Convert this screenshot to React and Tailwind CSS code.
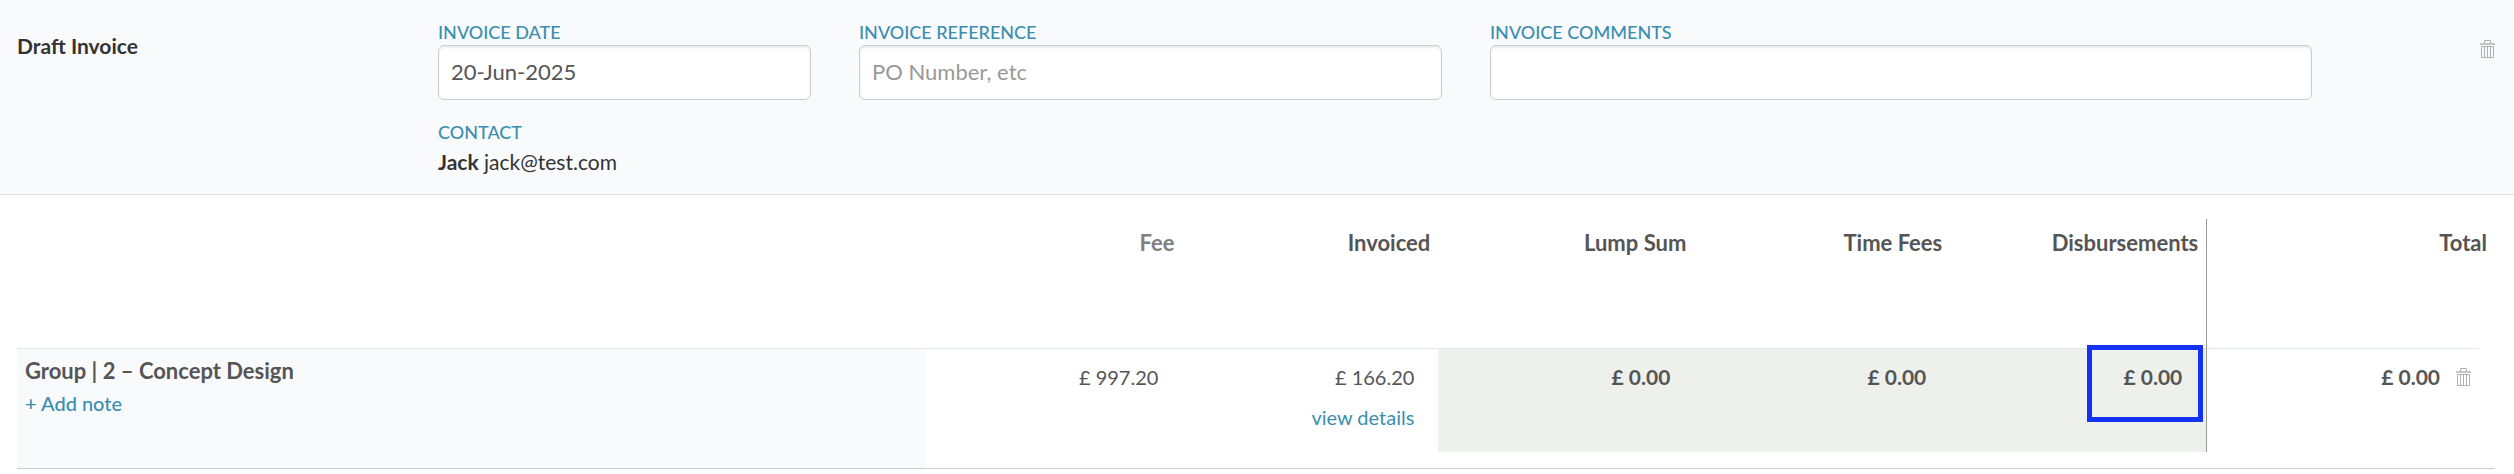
import { useState } from "react";

const columns = [
  { title: 'Fee', value: '£ 997.20', muted: true },
  { title: 'Invoiced', value: '£ 166.20', details: true },
  { title: 'Lump Sum', value: '£ 0.00', editable: true },
  { title: 'Time Fees', value: '£ 0.00', editable: true },
  { title: 'Disbursements', value: '£ 0.00', editable: true, selected: true },
];

const App = () => {
  const [date, setDate] = useState('20-Jun-2025');
  const [reference, setReference] = useState('');
  const [comments, setComments] = useState('');

  return (
    <div className="w-full bg-white font-['Lato','Liberation_Sans',sans-serif] text-xl leading-6 text-[#555]">
      {/* invoice header */}
      <header className="grid grid-cols-[373fr_373fr_583fr_822fr_135fr] gap-x-12 pl-[17px] pr-[19px] py-5 bg-[#f9fafc] border-b border-[#ddd]">
        <h1 className="pt-3.5 font-bold text-[21px]/6 text-[#333]">Draft Invoice</h1>

        <div>
          <Field id="date" label="INVOICE DATE" value={date} onChange={setDate} />

          <h2 className="mt-5 font-medium text-lg/6 text-[#3a8fb0]">CONTACT</h2>
          <p className="mt-1.5 text-[21px]/6 text-[#333]">
            <strong>Jack</strong> jack@test.com
          </p>
        </div>

        <Field
          id="reference"
          label="INVOICE REFERENCE"
          placeholder="PO Number, etc"
          value={reference}
          onChange={setReference}
        />
        <Field id="comments" label="INVOICE COMMENTS" value={comments} onChange={setComments} />

        <div className="flex justify-end items-start pt-5">
          <DeleteButton label="Delete invoice" />
        </div>
      </header>

      {/* fees table */}
      <div className="pl-[17px] pr-[19px] pt-6">
        <table className="w-full table-fixed border-separate border-spacing-0">
          <thead>
            <tr className="h-[129px] align-top text-[22px]/6 text-right">
              <th className="w-[36.7%]" aria-label="Stage"></th>
              {columns.map((col) => (
                <th
                  key={col.title}
                  className={`w-[10.33%] pt-3 pr-2 font-bold ${col.muted ? 'text-[#808080]' : ''}`}
                >
                  {col.title}
                </th>
              ))}
              <th className="pt-3 pr-2 font-bold border-l border-[#999]">Total</th>
            </tr>
          </thead>

          <tbody>
            <tr className="align-top">
              <td className="px-2 pt-2.5 bg-[#f9fafc] border-t border-b border-t-[#dfe5ee] border-b-[#ccc]">
                <p className="font-bold text-[22px]/6">Group | 2 – Concept Design</p>
                <a href="#note" className="block mt-2 font-medium text-[#3a8fb0]">+ Add note</a>
              </td>

              {columns.map((col) => (
                <AmountCell key={col.title} col={col} />
              ))}

              <td className="pb-4 border-b border-[#ccc]">
                <div className="h-26 border-l border-[#999]">
                  <div className="flex items-center justify-end gap-4 mr-4 pr-2 pt-4 border-t border-[#dfe5ee]">
                    <span className="font-bold text-[21px]/6">£ 0.00</span>
                    <DeleteButton label="Delete row" />
                  </div>
                </div>
              </td>
            </tr>
          </tbody>
        </table>
      </div>
    </div>
  )
}

export default App


const Field = ({ id, label, value, placeholder, onChange }) => {
  return (
    <div>
      <label htmlFor={id} className="block font-medium text-lg/6 text-[#3a8fb0]">{label}</label>
      <input
        id={id}
        type="text"
        value={value}
        placeholder={placeholder}
        onChange={(e) => onChange(e.target.value)}
        className="block w-full h-[55px] mt-px px-3 pb-0.5 rounded-md border border-[#ccc] bg-white text-[22px] text-[#555] placeholder:text-[#999] shadow-[inset_0_2px_2px_rgba(0,0,0,0.075)]"
      />
    </div>
  )
}


const AmountCell = ({ col }) => {
  return (
    <td className="pb-4 border-b border-[#ccc]">
      <div
        className={`relative h-26 pt-4 pr-6 text-right border-t border-[#dfe5ee] ${col.editable ? 'font-bold text-[21px]/6 bg-[#eef0eb]' : ''}`}
      >
        {col.value}
        {col.details && (
          <a href="#details" className="block mt-4 text-[#3a8fb0]">view details</a>
        )}

        {/* selected amount */}
        {col.selected && (
          <span className="absolute -top-1 right-[3px] w-29 h-[77px] border-5 border-[#1432f5]"></span>
        )}
      </div>
    </td>
  )
}


const DeleteButton = ({ label }) => {
  return (
    <button type="button" aria-label={label} className="cursor-pointer text-[#b0b0b0]">
      <svg width="15" height="18" viewBox="0 0 15 18" fill="none" stroke="currentColor">
        <path d="M4.5 3V0.5h6V3" />
        <path d="M0 4h15" strokeWidth="2" opacity="0.75" />
        <path d="M1.5 6.5h12v11h-12z" />
        <path d="M4.5 7v10M7.5 7v10M10.5 7v10" />
      </svg>
    </button>
  )
}
